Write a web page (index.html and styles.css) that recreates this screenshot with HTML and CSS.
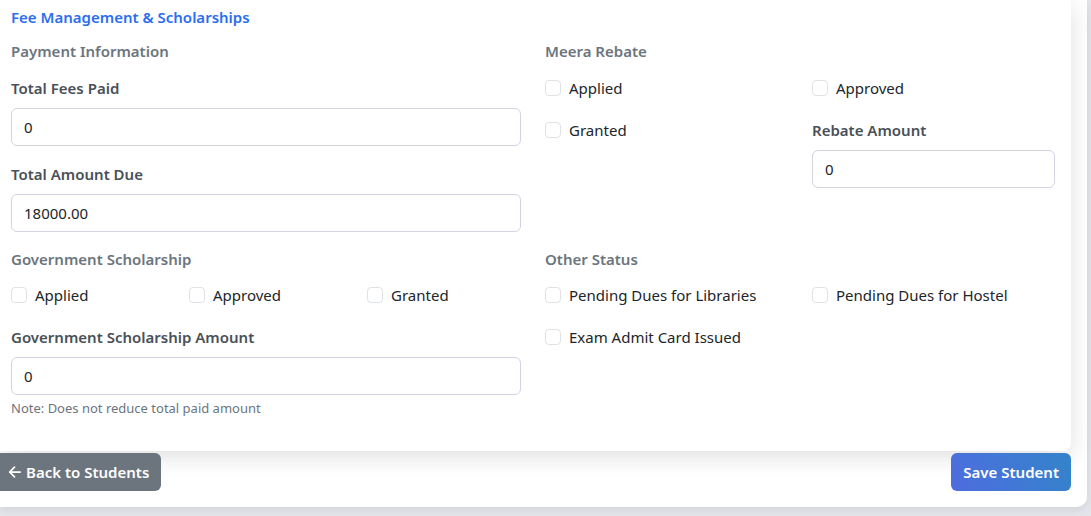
FILE: index.html
```html
<!DOCTYPE html>
<html lang="en">
<head>
<meta charset="utf-8">
<title>Fee Management</title>
<link rel="stylesheet" href="styles.css">
</head>
<body>
<div class="outer">
  <div class="card">
    <h5 class="section-title">Fee Management &amp; Scholarships</h5>
    <div class="row">
      <div class="col">
        <h6 class="sub">Payment Information</h6>
        <div class="field">
          <label class="lbl">Total Fees Paid</label>
          <input class="inp" type="text" value="0">
        </div>
        <div class="field">
          <label class="lbl">Total Amount Due</label>
          <input class="inp" type="text" value="18000.00">
        </div>
      </div>
      <div class="col">
        <h6 class="sub">Meera Rebate</h6>
        <div class="half-grid">
          <div class="stack">
            <label class="chk"><span class="box"></span>Applied</label>
            <label class="chk"><span class="box"></span>Granted</label>
          </div>
          <div class="stack">
            <label class="chk"><span class="box"></span>Approved</label>
            <div class="field">
              <label class="lbl">Rebate Amount</label>
              <input class="inp" type="text" value="0">
            </div>
          </div>
        </div>
      </div>
    </div>
    <div class="row">
      <div class="col">
        <h6 class="sub">Government Scholarship</h6>
        <div class="third-grid">
          <label class="chk"><span class="box"></span>Applied</label>
          <label class="chk"><span class="box"></span>Approved</label>
          <label class="chk"><span class="box"></span>Granted</label>
        </div>
        <div class="field">
          <label class="lbl">Government Scholarship Amount</label>
          <input class="inp" type="text" value="0">
          <div class="note">Note: Does not reduce total paid amount</div>
        </div>
      </div>
      <div class="col">
        <h6 class="sub">Other Status</h6>
        <div class="half-grid">
          <label class="chk"><span class="box"></span>Pending Dues for Libraries</label>
          <label class="chk"><span class="box"></span>Pending Dues for Hostel</label>
          <label class="chk"><span class="box"></span>Exam Admit Card Issued</label>
        </div>
      </div>
    </div>
  </div>
  <div class="actions">
    <button class="btn btn-back" type="button"><svg class="arrow" width="15" height="14" viewBox="0 0 16 16"><path d="M14.5 8H2.5M8 2.5 2.5 8 8 13.5" fill="none" stroke="#fff" stroke-width="2" stroke-linecap="round" stroke-linejoin="round"/></svg>Back to Students</button>
    <button class="btn btn-save" type="button">Save Student</button>
  </div>
</div>
</body>
</html>
```

FILE: styles.css
```css
* { box-sizing: border-box; }
html, body { margin: 0; padding: 0; }
body {
  background: #e4e5ea;
  font-family: "Noto Sans", "Open Sans", sans-serif;
  font-size: 15px;
  color: #212529;
  height: 516px;
  overflow: hidden;
}
.outer {
  width: 1087px;
  background: #fff;
  border-radius: 0 0 10px 0;
  padding: 0 16px 16px 0;
  box-shadow: 0 3px 10px rgba(0,0,0,0.08);
}
.card {
  background: #fff;
  border-radius: 0 0 8px 0;
  box-shadow: 0 6px 24px rgba(0,0,0,0.13);
  padding: 6px 16px 18px 11px;
}
.section-title {
  margin: 0 0 12px;
  font-size: 15px;
  line-height: 22px;
  font-weight: 600;
  color: #2a6ef0;
}
.row {
  display: grid;
  grid-template-columns: 510px 510px;
  column-gap: 24px;
}
.sub {
  margin: 0 0 14px;
  font-size: 15px;
  line-height: 22px;
  font-weight: 600;
  color: #6c757d;
}
.row + .row .sub { margin-bottom: 13px; }
.field { margin-bottom: 16px; display: flex; flex-direction: column; }
.lbl {
  font-weight: 600;
  color: #495057;
  line-height: 24px;
  margin-bottom: 8px;
}
.inp {
  height: 38px;
  width: 100%;
  border: 1px solid #d3d3e3;
  border-radius: 6px;
  padding: 0 12px;
  font-family: inherit;
  font-size: 15px;
  color: #212529;
  background: #fff;
  outline: none;
}
.half-grid {
  display: grid;
  grid-template-columns: 243px 243px;
  column-gap: 24px;
  row-gap: 18px;
}
.stack { display: flex; flex-direction: column; gap: 18px; }
.stack .field { margin-bottom: 0; }
.third-grid {
  display: grid;
  grid-template-columns: repeat(3, 154px);
  column-gap: 24px;
  margin-bottom: 18px;
}
.chk {
  display: flex;
  align-items: center;
  gap: 8px;
  line-height: 24px;
  color: #212529;
}
.box {
  width: 16px;
  height: 16px;
  border: 1px solid #dee2e6;
  border-radius: 4px;
  background: #fff;
  flex: none;
}
.note {
  margin-top: 4px;
  font-size: 13px;
  line-height: 18px;
  color: #6c757d;
}
.actions {
  display: flex;
  justify-content: space-between;
  margin-top: 2px;
}
.btn {
  height: 38px;
  border: none;
  border-radius: 6px;
  font-family: inherit;
  font-size: 15px;
  font-weight: 600;
  color: #fff;
  display: flex;
  align-items: center;
  gap: 4px;
}
.btn-back {
  background: #6c757d;
  padding: 0 12px 0 7px;
  border-radius: 0 6px 6px 0;
}
.btn-save {
  background: linear-gradient(60deg, #4e6cdf 0%, #3384ca 100%);
  padding: 0 12px;
}
.arrow { flex: none; }
```
